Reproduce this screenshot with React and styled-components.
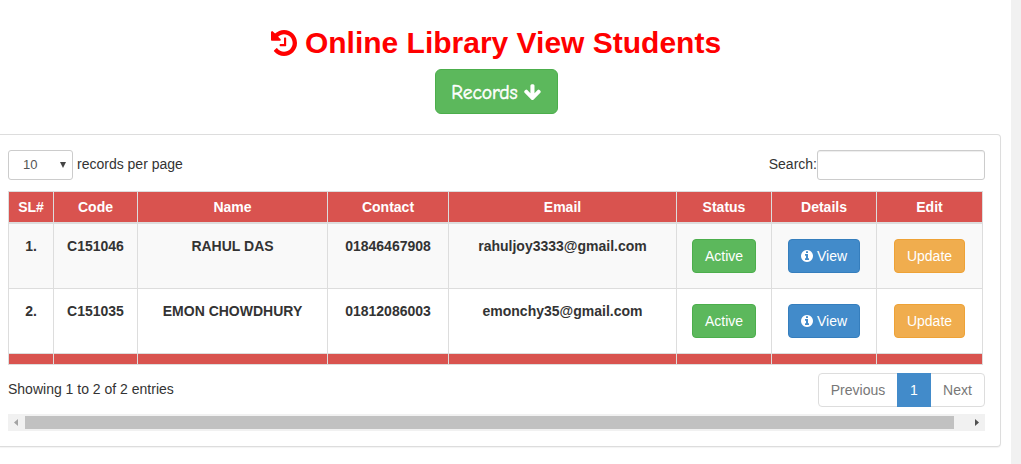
import React from 'react';
import styled, { createGlobalStyle } from 'styled-components';

const GlobalStyle = createGlobalStyle`
  *, *::before, *::after { box-sizing: border-box; }
  body {
    margin: 0;
    background: #fff;
    color: #333;
    font: 14px/20px "Liberation Sans", Arial, sans-serif;
    overflow: hidden;
  }
`;

const Page = styled.div`
  display: flex;
  height: 464px;
`;

const Main = styled.main`
  flex: 1;
  min-width: 0;
  padding-right: 10px;
`;

const PageGutter = styled.div`
  width: 10px;
  background: #f1f1f1;
`;

const Header = styled.header`
  display: flex;
  flex-direction: column;
  align-items: center;
  width: 992px;
  padding-top: 26px;
`;

const Title = styled.h1`
  display: flex;
  align-items: center;
  gap: 8px;
  height: 33px;
  margin: 0 0 10px;
  color: #f00;
  font-size: 30px;
  line-height: 33px;
  font-weight: 700;
  white-space: nowrap;
`;

const TitleText = styled.span`
  padding-bottom: 1px;
`;

const Icon = styled.svg`
  display: block;
  flex: none;
  width: ${(p) => p.$size}px;
  height: ${(p) => p.$size}px;
  fill: currentColor;
`;

const variants = {
  success: ['#5cb85c', '#4cae4c'],
  primary: ['#428bca', '#357ebd'],
  warning: ['#f0ad4e', '#eea236'],
};

const Button = styled.button`
  display: inline-flex;
  align-items: center;
  justify-content: center;
  gap: 4px;
  width: ${(p) => p.$width}px;
  height: 34px;
  padding: 0;
  border: 1px solid ${(p) => variants[p.$variant][1]};
  border-radius: 4px;
  background: ${(p) => variants[p.$variant][0]};
  color: #fff;
  font: inherit;
  font-weight: 400;
  vertical-align: top;
`;

const RecordsButton = styled(Button)`
  gap: 6px;
  height: 45px;
  padding-top: 2px;
  border-radius: 6px;
  font-family: "Comic Sans MS", "Comic Neue", "Open Sans", sans-serif;
  font-size: 19.5px;
  -webkit-text-stroke: 0.5px #fff;
`;

const Panel = styled.section`
  width: 1001px;
  height: 313px;
  margin-top: 20px;
  padding: 15px 15px 0 8px;
  border: 1px solid #ddd;
  border-left: 0;
  border-radius: 0 4px 4px 0;
  box-shadow: 0 1px 1px rgba(0, 0, 0, 0.05);
`;

const Bar = styled.div`
  display: flex;
  justify-content: space-between;
`;

const Label = styled.label`
  display: flex;
  align-items: flex-start;
  height: 30px;
  line-height: 28px;
`;

const LengthBox = styled.span`
  display: flex;
  align-items: center;
  justify-content: space-between;
  width: 65px;
  height: 30px;
  margin-right: 4px;
  padding: 0 6px 0 14px;
  border: 1px solid #ccc;
  border-radius: 3px;
  color: #555;
  font-size: 13px;
`;

const SearchInput = styled.input`
  width: 168px;
  height: 30px;
  border: 1px solid #ccc;
  border-radius: 3px;
  box-shadow: inset 0 1px 1px rgba(0, 0, 0, 0.075);
  background: #fff;
`;

const Table = styled.table`
  width: 975px;
  margin: 11px 0 8px;
  table-layout: fixed;
  border-spacing: 0;
  border-top: 1px solid #ddd;
  text-align: center;
  font-weight: 700;
`;

const Cell = styled.td`
  height: 65px;
  padding: ${(p) => (p.$action ? '15px 0 0' : '12px 0 0')};
  border: solid #ddd;
  border-width: 0 1px 1px 0;
  vertical-align: top;
  white-space: nowrap;
  &:first-child { border-left-width: 1px; }
`;

const HeadCell = styled.th`
  height: 32px;
  padding: 0;
  border: solid #ddd;
  border-width: 0 1px 2px 0;
  background: #d9534f;
  color: #fff;
  &:first-child { border-left-width: 1px; }
`;

const FootCell = styled(HeadCell)`
  height: 11px;
  border-bottom-width: 1px;
`;

const Row = styled.tr`
  background: ${(p) => (p.$striped ? '#f9f9f9' : '#fff')};
`;

const Pagination = styled.nav`
  display: flex;
  width: 167px;
  height: 34px;
  border: 1px solid #ddd;
  border-radius: 4px;
`;

const PageLink = styled.span`
  flex: none;
  width: ${(p) => p.$width}px;
  height: 34px;
  margin-top: -1px;
  line-height: 34px;
  text-align: center;
  color: ${(p) => (p.$active ? '#fff' : '#777')};
  background: ${(p) => (p.$active ? '#428bca' : 'transparent')};
`;

const Info = styled.div`
  padding-top: 6px;
`;

const ScrollTrack = styled.div`
  display: flex;
  align-items: center;
  justify-content: space-between;
  width: 977px;
  height: 17px;
  margin-top: 7px;
  padding: 0 6px;
  background: #f1f1f1;
`;

const ScrollThumb = styled.div`
  width: 929px;
  height: 13px;
  margin: 0 auto 0 7px;
  background: #c1c1c1;
`;

const Arrow = styled.svg`
  display: block;
  flex: none;
  width: ${(p) => p.$w}px;
  height: ${(p) => p.$h}px;
  fill: ${(p) => p.$color};
`;

const HISTORY =
  'M1536 896q0 156-61 298t-164 245-245 164-298 61q-172 0-327-72.5t-264-204.5q-7-10-6.5-22.5t8.5-20.5l137-138q10-9 25-9 16 2 23 12 73 95 179 147t225 52q104 0 198.5-40.5t163.5-109.5 109.5-163.5 40.5-198.5-40.5-198.5-109.5-163.5-163.5-109.5-198.5-40.5q-98 0-188 35.5t-160 101.5l137 138q31 30 14 69-17 40-59 40h-448q-26 0-45-19t-19-45v-448q0-42 40-59 39-17 69 14l130 129q107-101 244.5-156.5t284.5-55.5q156 0 298 61t245 164 164 245 61 298zm-640-288v448q0 14-9 23t-23 9h-320q-14 0-23-9t-9-23v-64q0-14 9-23t23-9h224v-352q0-14 9-23t23-9h64q14 0 23 9t9 23z';
const ARROW_DOWN =
  'M1675 832q0 53-37 90l-651 652q-39 37-91 37-53 0-90-37l-651-652q-38-36-38-90 0-53 38-91l74-75q39-37 91-37 53 0 90 37l294 294v-704q0-52 38-90t90-38h128q52 0 90 38t38 90v704l294-294q37-37 90-37 52 0 91 37l75 75q37 39 37 91z';
const INFO =
  'M1024 1376v-160q0-14-9-23t-23-9h-96v-512q0-14-9-23t-23-9h-320q-14 0-23 9t-9 23v160q0 14 9 23t23 9h96v320h-96q-14 0-23 9t-9 23v160q0 14 9 23t23 9h448q14 0 23-9t9-23zm-128-896v-160q0-14-9-23t-23-9h-192q-14 0-23 9t-9 23v160q0 14 9 23t23 9h192q14 0 23-9t9-23zm640 416q0 209-103 385.5t-279.5 279.5-385.5 103-385.5-103-279.5-279.5-103-385.5 103-385.5 279.5-279.5 385.5-103 385.5 103 279.5 279.5 103 385.5z';

const columns = [
  ['SL#', 46],
  ['Code', 84],
  ['Name', 190],
  ['Contact', 121],
  ['Email', 228],
  ['Status', 95],
  ['Details', 105],
  ['Edit', 106],
];

const students = [
  { code: 'C151046', name: 'RAHUL DAS', contact: '01846467908', email: 'rahuljoy3333@gmail.com' },
  { code: 'C151035', name: 'EMON CHOWDHURY', contact: '01812086003', email: 'emonchy35@gmail.com' },
];

export default function App() {
  return (
    <Page>
      <GlobalStyle />
      <Main>
        <Header>
          <Title>
            <Icon $size={26} viewBox="0 128 1536 1536"><path d={HISTORY} /></Icon>
            <TitleText>Online Library View Students</TitleText>
          </Title>
          <RecordsButton $variant="success" $width={123}>
            Records
            <Icon $size={17} viewBox="100 100 1600 1600"><path d={ARROW_DOWN} /></Icon>
          </RecordsButton>
        </Header>
        <Panel>
          <Bar>
            <Label>
              <LengthBox>
                10
                <Arrow $w={6} $h={6} $color="#444" viewBox="0 0 6 6"><path d="M0 0h6L3 6z" /></Arrow>
              </LengthBox>
              records per page
            </Label>
            <Label>
              Search:
              <SearchInput type="text" />
            </Label>
          </Bar>
          <Table>
            <colgroup>
              {columns.map(([name, width]) => <col key={name} width={width} />)}
            </colgroup>
            <thead>
              <tr>{columns.map(([name]) => <HeadCell key={name}>{name}</HeadCell>)}</tr>
            </thead>
            <tbody>
              {students.map((s, i) => (
                <Row key={s.code} $striped={i % 2 === 0}>
                  <Cell>{i + 1}.</Cell>
                  <Cell>{s.code}</Cell>
                  <Cell>{s.name}</Cell>
                  <Cell>{s.contact}</Cell>
                  <Cell>{s.email}</Cell>
                  <Cell $action><Button $variant="success" $width={64}>Active</Button></Cell>
                  <Cell $action>
                    <Button $variant="primary" $width={72}>
                      <Icon $size={12} viewBox="0 128 1536 1536"><path d={INFO} /></Icon>
                      View
                    </Button>
                  </Cell>
                  <Cell $action><Button $variant="warning" $width={71}>Update</Button></Cell>
                </Row>
              ))}
            </tbody>
            <tfoot>
              <tr>{columns.map(([name]) => <FootCell as="td" key={name} />)}</tr>
            </tfoot>
          </Table>
          <Bar>
            <Info>Showing 1 to 2 of 2 entries</Info>
            <Pagination>
              <PageLink $width={78}>Previous</PageLink>
              <PageLink $width={34} $active>1</PageLink>
              <PageLink $width={53}>Next</PageLink>
            </Pagination>
          </Bar>
          <ScrollTrack>
            <Arrow $w={4} $h={7} $color="#a3a3a3" viewBox="0 0 4 7"><path d="M4 0v7L0 3.5z" /></Arrow>
            <ScrollThumb />
            <Arrow $w={4} $h={7} $color="#505050" viewBox="0 0 4 7"><path d="M0 0v7l4-3.5z" /></Arrow>
          </ScrollTrack>
        </Panel>
      </Main>
      <PageGutter />
    </Page>
  );
}
